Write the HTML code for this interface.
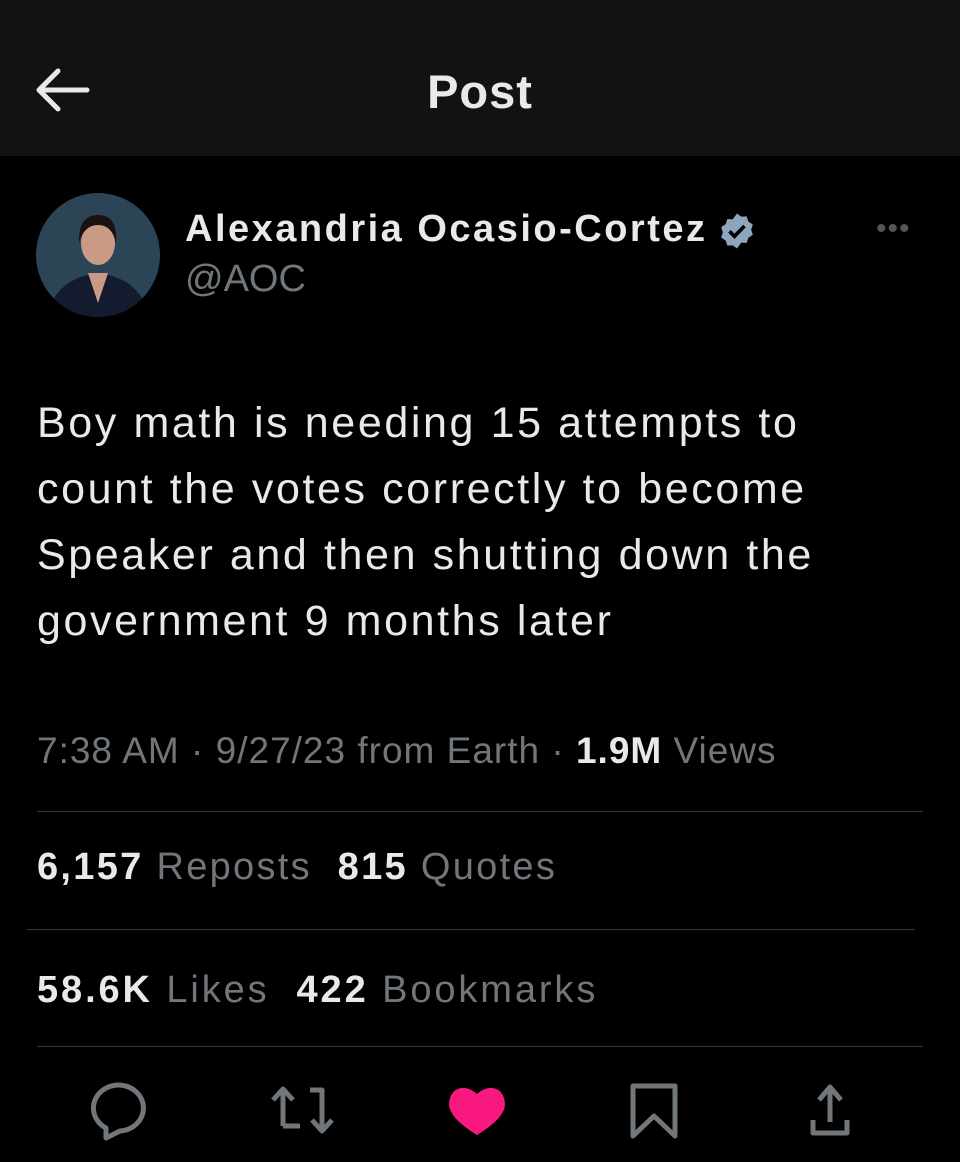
<!DOCTYPE html>
<html><head><meta charset="utf-8"><style>
body{margin:0;width:960px;height:1162px;background:#000;font-family:"Liberation Sans",sans-serif;color:#e7e9ea;position:relative;overflow:hidden}
.hdr{position:absolute;left:0;top:0;width:960px;height:156px;background:#121212}
.t{position:absolute;white-space:nowrap}
.g{color:#71767b}
.b{font-weight:bold;color:#e7e9ea}
.line{position:absolute;height:1px;background:#2f3336}
</style></head><body>
<div class="hdr">
<svg style="position:absolute;left:34px;top:68px" width="56" height="44" viewBox="0 0 56 44"><path d="M24 3 L5 22 L24 41 M5 22 H53" stroke="#e7e9ea" stroke-width="5" fill="none" stroke-linecap="round" stroke-linejoin="round"/></svg>
<div class="t b" style="left:0;width:960px;text-align:center;top:64px;font-size:47px;letter-spacing:1px">Post</div>
</div>
<svg style="position:absolute;left:36px;top:193px" width="124" height="124" viewBox="0 0 124 124">
<defs><clipPath id="c"><circle cx="62" cy="62" r="62"/></clipPath></defs>
<g clip-path="url(#c)"><rect width="124" height="124" fill="#2b4556"/>
<path d="M10 124 Q20 85 62 80 Q104 85 114 124Z" fill="#141b2e"/>
<path d="M52 80 L62 110 L72 80Z" fill="#c99b85"/>
<ellipse cx="62" cy="50" rx="17" ry="22" fill="#c99b85"/>
<path d="M43 50 Q42 22 62 22 Q82 22 80 50 Q76 32 62 32 Q48 32 43 50Z" fill="#1a1210"/></g></svg>
<div class="t b" style="left:185px;top:208px;font-size:38px;letter-spacing:2.5px">Alexandria Ocasio-Cortez</div>
<svg style="position:absolute;left:717px;top:211px" width="40" height="40" viewBox="0 0 24 24"><path d="M12 1.5l2.6 1.9 3.2-.2 1 3.1 2.7 1.8-1 3.1 1 3.1-2.7 1.8-1 3.1-3.2-.2L12 22.5l-2.6-1.9-3.2.2-1-3.1-2.7-1.8 1-3.1-1-3.1 2.7-1.8 1-3.1 3.2.2z" fill="#8ea6bd"/><path d="M7.5 12.2l3 3 6-6.2" stroke="#000" stroke-width="2.2" fill="none"/></svg>
<div class="t g" style="left:876px;top:212px;font-size:30px;letter-spacing:1px;color:#555">•••</div>
<div class="t g" style="left:185px;top:258px;font-size:38px">@AOC</div>
<div class="t" style="left:37px;top:390px;font-size:43px;line-height:66px;white-space:normal;width:920px;letter-spacing:2.6px">Boy math is needing 15 attempts to<br>count the votes correctly to become<br>Speaker and then shutting down the<br>government 9 months later</div>
<div class="t g" style="left:37px;top:730px;font-size:37px;letter-spacing:1px">7:38 AM · 9/27/23 from Earth · <span class="b">1.9M</span> Views</div>
<div class="line" style="left:37px;top:811px;width:886px"></div>
<div class="t g" style="left:37px;top:846px;font-size:38px;letter-spacing:2.3px"><span class="b">6,157</span> Reposts&nbsp; <span class="b">815</span> Quotes</div>
<div class="line" style="left:27px;top:929px;width:888px"></div>
<div class="t g" style="left:37px;top:969px;font-size:38px;letter-spacing:2.9px"><span class="b">58.6K</span> Likes&nbsp; <span class="b">422</span> Bookmarks</div>
<div class="line" style="left:37px;top:1046px;width:886px"></div>
<svg style="position:absolute;left:60px;top:1060px" width="840" height="102" viewBox="0 0 840 102">
<g stroke="#71767b" stroke-width="5" fill="none" stroke-linejoin="round">
<path d="M46 68 A25 23 0 1 1 60 71 L46 78 Z"/>
<path d="M223 66 V30 M213 40 L223 29 L233 40 M223 66 H240"/>
<path d="M250 30 H262 V70 M252 60 L262 71 L272 60"/>
<path d="M573 26 H615 V76 L594 56 L573 76 Z"/>
<path d="M770 62 V28 M759 40 L770 27 L781 40 M753 60 V73 H787 V60"/>
</g>
<path d="M417 34 Q409 27 401 28 Q390 30 389 44 Q389 58 417 75 Q445 58 445 44 Q444 30 433 28 Q425 27 417 34Z" fill="#f91880"/>
</svg>
</body></html>
